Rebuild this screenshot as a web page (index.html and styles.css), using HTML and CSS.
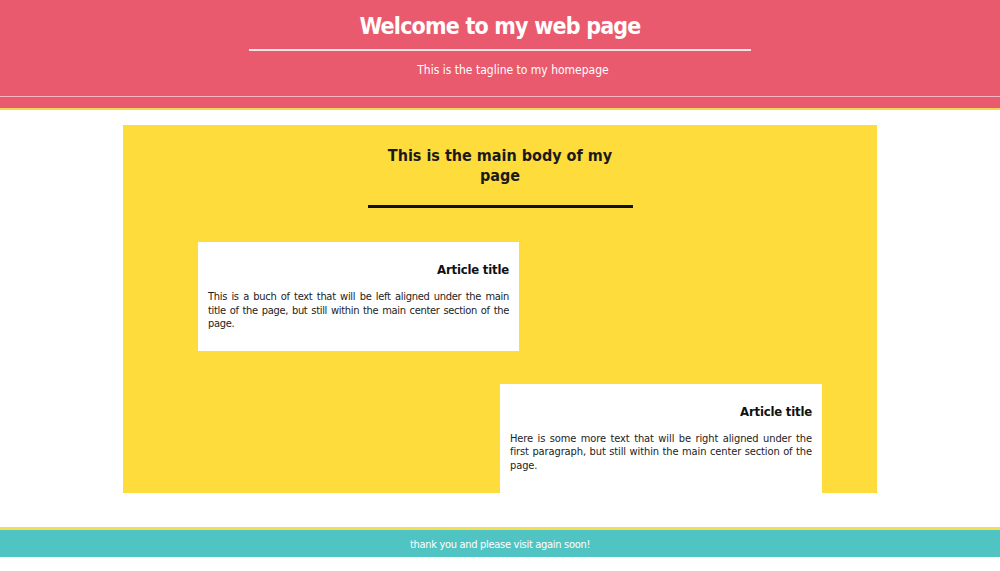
FILE: index.html
```html
<!DOCTYPE html>
<html lang="en">
<head>
<meta charset="utf-8">
<title>Welcome to my web page</title>
<link rel="stylesheet" href="styles.css">
</head>
<body>
<header class="site-header">
  <div class="header-inner">
    <h1 class="site-title">Welcome to my web page</h1>
    <p class="tagline">This is the tagline to my homepage</p>
  </div>
</header>
<main class="main">
  <h2 class="main-title">This is the main body of my page</h2>
  <article class="article article-left">
    <h3 class="article-title">Article title</h3>
    <p class="article-text">This is a buch of text that will be left aligned under the main title of the page, but still within the main center section of the page.</p>
  </article>
  <article class="article article-right">
    <h3 class="article-title">Article title</h3>
    <p class="article-text">Here is some more text that will be right aligned under the first paragraph, but still within the main center section of the page.</p>
  </article>
</main>
<footer class="site-footer">thank you and please visit again soon!</footer>
</body>
</html>
```
FILE: styles.css
```css
html, body {
  margin: 0;
  padding: 0;
  background: #ffffff;
}
body {
  font-family: "DejaVu Sans Condensed", "DejaVu Sans", sans-serif;
  color: #151515;
}
.site-header {
  background: #ea5a6e;
  padding-bottom: 11px;
  border-bottom: 2px solid #f7d94c;
  text-align: center;
  color: #ffffff;
}
.header-inner {
  padding-top: 12px;
  padding-bottom: 19px;
  border-bottom: 1px solid #f6b6c0;
}
.site-title {
  width: 502px;
  margin: 0 auto;
  padding-bottom: 9px;
  border-bottom: 2px solid #f7e3e6;
  font-size: 23px;
  line-height: 28px;
  font-weight: bold;
  letter-spacing: -0.8px;
}
.tagline {
  margin: 12px 0 0;
  padding-left: 26px;
  font-size: 12px;
  line-height: 14px;
}
.main {
  width: 754px;
  margin: 15px auto 0;
  padding: 21px 0 0;
  box-sizing: border-box;
  background: #fddc3c;
  display: flex;
  flex-direction: column;
}
.main-title {
  align-self: center;
  width: 265px;
  margin: 0 0 34px;
  padding: 0 0 19px;
  border-bottom: 3px solid #111111;
  text-align: center;
  font-size: 16px;
  line-height: 20px;
  font-weight: bold;
  color: #1a1a1a;
}
.article {
  box-sizing: border-box;
  background: #ffffff;
  padding: 20px 10px;
}
.article-left {
  width: 321px;
  align-self: flex-start;
  margin: 0 0 33px 75px;
}
.article-right {
  width: 322px;
  align-self: flex-end;
  margin-right: 55px;
  padding-bottom: 21px;
}
.article-title {
  margin: 0 0 12px;
  text-align: right;
  font-size: 13px;
  line-height: 16px;
  font-weight: bold;
  letter-spacing: -0.2px;
  color: #111111;
}
.article-text {
  margin: 0;
  font-size: 11px;
  line-height: 13.5px;
  letter-spacing: -0.3px;
  text-align: justify;
  color: #222222;
}
.article-right .article-text {
  letter-spacing: -0.1px;
}
.site-footer {
  margin-top: 34px;
  border-top: 3px solid #f5de52;
  background: #4fc4c2;
  color: #ffffff;
  text-align: center;
  font-size: 11px;
  letter-spacing: -0.3px;
  line-height: 29px;
  height: 27px;
}
```
